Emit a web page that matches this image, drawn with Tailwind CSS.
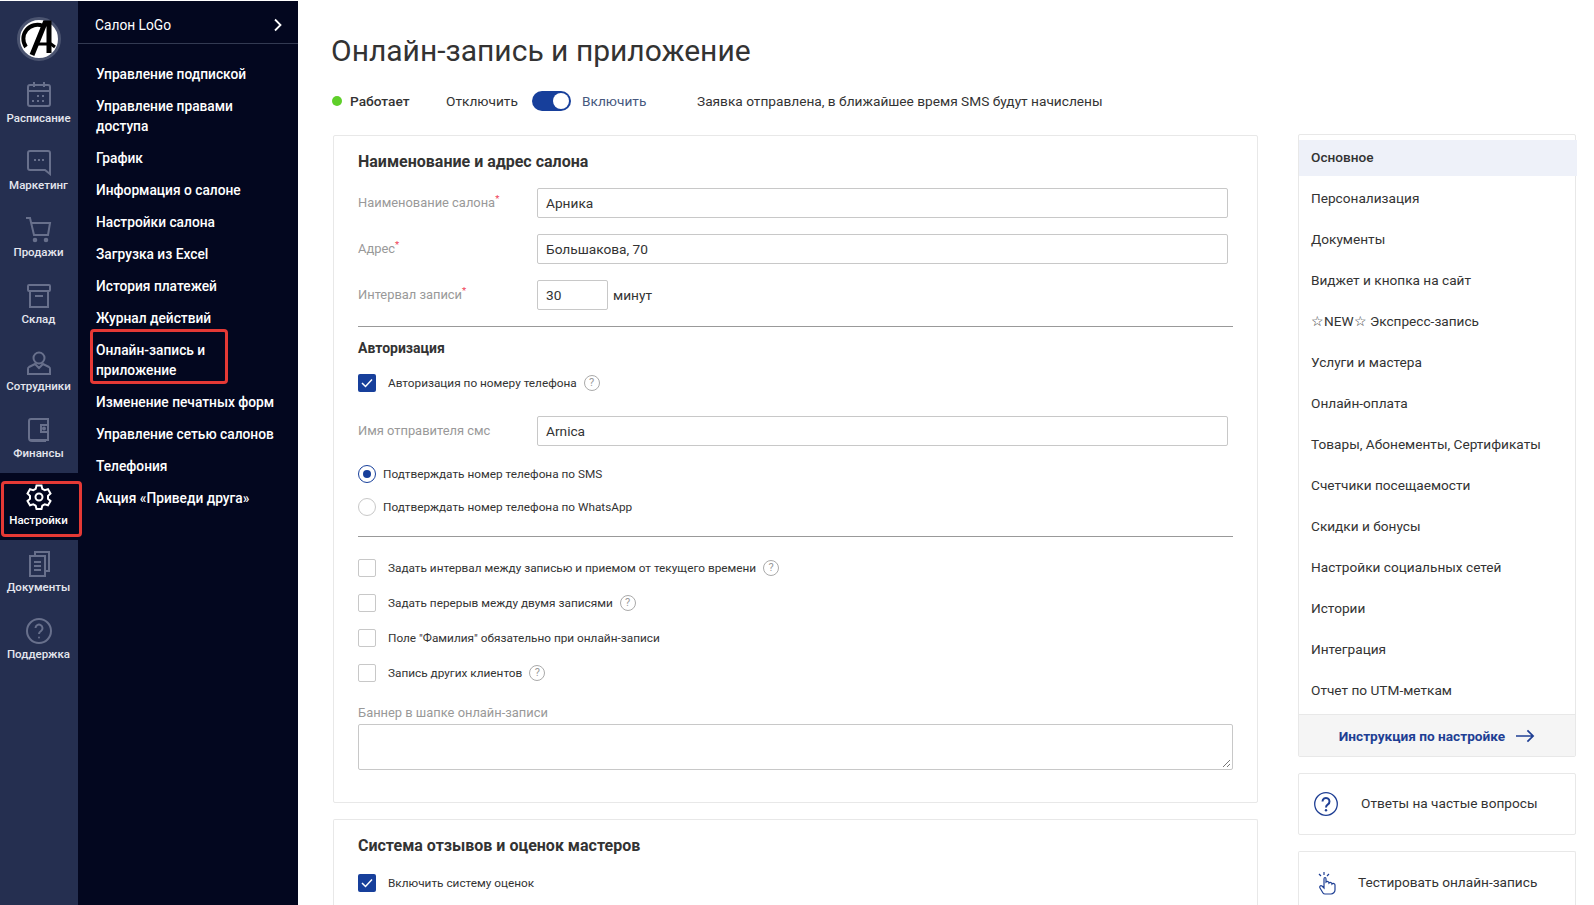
<!DOCTYPE html>
<html lang="ru">
<head>
    <meta charset="UTF-8">
    <title>Онлайн-запись и приложение</title>
    <script src="https://cdn.jsdelivr.net/npm/@tailwindcss/browser@4"></script>
</head>
<body class="h-screen overflow-hidden bg-white font-['Roboto',sans-serif] text-[#333]">
<div class="relative flex h-[905px] overflow-hidden pt-px">
    <!-- icon rail -->
    <nav class="w-[78px] shrink-0 bg-[#252f50] text-[#e4e6ee]">
        <div class="flex h-[70px] items-center justify-center pr-px pt-[6px]">
            <div class="flex h-[44px] w-[44px] items-center justify-center rounded-full border-[3px] border-[#4b5470] bg-white">
                <svg viewBox="0 0 38 38" class="h-[38px] w-[38px]"><path d="M6 27A14 14 0 0 1 23 6" fill="none" stroke="#000" stroke-width="4"/><path d="M12 35 25 3h4v30" fill="none" stroke="#000" stroke-width="5"/><path d="M17 24h14l4 3" fill="none" stroke="#000" stroke-width="3"/></svg>
            </div>
        </div>
        <a class="flex h-[67px] flex-col items-center pr-px pt-[10px] text-[11.5px] font-medium">
            <svg viewBox="0 0 28 28" class="h-[28px] w-[28px]" fill="none" stroke="#68708c" stroke-width="2"><rect x="3" y="4" width="22" height="21" rx="2"/><path d="M3 10h22M9 1v5M19 1v5"/><path d="M12 15h2M17 15h2M7 20h2M12 20h2M17 20h2"/></svg>
            <span class="mt-[2px] leading-[14px]">Расписание</span>
        </a>
        <a class="flex h-[67px] flex-col items-center pr-px pt-[10px] text-[11.5px] font-medium">
            <svg viewBox="0 0 28 28" class="h-[28px] w-[28px]" fill="none" stroke="#68708c" stroke-width="2"><path d="M5 3h18a2 2 0 0 1 2 2v21l-5-4H5a2 2 0 0 1-2-2V5a2 2 0 0 1 2-2z"/><path d="M9 12h2M13 12h2M17 12h2"/></svg>
            <span class="mt-[2px] leading-[14px]">Маркетинг</span>
        </a>
        <a class="flex h-[67px] flex-col items-center pr-px pt-[10px] text-[11.5px] font-medium">
            <svg viewBox="0 0 28 28" class="h-[28px] w-[28px]" fill="none" stroke="#68708c" stroke-width="2"><path d="M1 3h4l4 17h14l2-12H7"/><circle cx="10" cy="25" r="1.3" fill="#68708c"/><circle cx="21" cy="25" r="1.3" fill="#68708c"/></svg>
            <span class="mt-[2px] leading-[14px]">Продажи</span>
        </a>
        <a class="flex h-[67px] flex-col items-center pr-px pt-[10px] text-[11.5px] font-medium">
            <svg viewBox="0 0 28 28" class="h-[28px] w-[28px]" fill="none" stroke="#68708c" stroke-width="2"><rect x="3" y="3" width="22" height="6" rx="1"/><path d="M5 9v16h18V9M10 14h8"/></svg>
            <span class="mt-[2px] leading-[14px]">Склад</span>
        </a>
        <a class="flex h-[67px] flex-col items-center pr-px pt-[10px] text-[11.5px] font-medium">
            <svg viewBox="0 0 28 28" class="h-[28px] w-[28px]" fill="none" stroke="#68708c" stroke-width="2"><circle cx="14" cy="9" r="5.5"/><path d="M10 15l-6 3a2 2 0 0 0-1 2v5h22v-5a2 2 0 0 0-1-2l-6-3-4 4z"/></svg>
            <span class="mt-[2px] leading-[14px]">Сотрудники</span>
        </a>
        <a class="flex h-[67px] flex-col items-center pr-px pt-[10px] text-[11.5px] font-medium">
            <svg viewBox="0 0 28 28" class="h-[28px] w-[28px]" fill="none" stroke="#68708c" stroke-width="2"><path d="M6 3h17v21H6a2 2 0 0 1-2-2V5a2 2 0 0 1 2-2zM4 22a3 3 0 0 0 3 3h14"/><path d="M23 9h-7v7h7"/><circle cx="19" cy="12.500" r="1" fill="#68708c"/></svg>
            <span class="mt-[2px] leading-[14px]">Финансы</span>
        </a>
        <a class="flex h-[67px] flex-col items-center bg-[#03071f] pr-px pt-[10px] text-[11.5px] font-medium text-white">
            <svg viewBox="0 0 28 28" class="h-[28px] w-[28px]" fill="none" stroke="#fff" stroke-width="2"><circle cx="14" cy="14" r="3.500"/><path d="M11.500 2.500h5l.8 3.400 2.400 1.300 3.300-1 2.500 4.300-2.500 2.400v2.800l2.500 2.300-2.500 4.300-3.300-1-2.400 1.400-.8 3.300h-5l-.8-3.300-2.400-1.400-3.300 1-2.500-4.300 2.500-2.300v-2.800l-2.500-2.400 2.500-4.300 3.300 1 2.400-1.300z"/></svg>
            <span class="mt-[2px] leading-[14px]">Настройки</span>
        </a>
        <a class="flex h-[67px] flex-col items-center pr-px pt-[10px] text-[11.5px] font-medium">
            <svg viewBox="0 0 28 28" class="h-[28px] w-[28px]" fill="none" stroke="#68708c" stroke-width="2"><path d="M10 6V2h14v19h-4"/><path d="M5 6h15v20H5zM9 12h7M9 16h7M9 20h7"/></svg>
            <span class="mt-[2px] leading-[14px]">Документы</span>
        </a>
        <a class="flex h-[67px] flex-col items-center pr-px pt-[10px] text-[11.5px] font-medium">
            <svg viewBox="0 0 28 28" class="h-[28px] w-[28px]" fill="none" stroke="#68708c" stroke-width="2"><circle cx="14" cy="14" r="12"/><path d="M10.500 11a3.500 3.500 0 1 1 5.500 3c-1.300.9-2 1.600-2 3"/><circle cx="14" cy="20.500" r="1" fill="#68708c" stroke="none"/></svg>
            <span class="mt-[2px] leading-[14px]">Поддержка</span>
        </a>
    </nav>

    <!-- settings menu -->
    <aside class="w-[220px] shrink-0 bg-[#03071f] text-[13.75px] font-medium leading-[20px] text-white">
        <div class="flex h-[43px] items-center justify-between border-b border-[#333a52] pl-[17px] pr-[15px] pt-[5px]">
            <span class="font-normal">Салон LoGo</span>
            <svg viewBox="0 0 10 14" class="h-[14px] w-[10px]" fill="none" stroke="#fff" stroke-width="1.800"><path d="M2 1.500 7.500 7 2 12.500"/></svg>
        </div>
        <ul class="flex flex-col gap-[12px] pl-[18px] pr-[20px] pt-[20px]">
            <li>Управление подпиской</li>
            <li>Управление правами доступа</li>
            <li>График</li>
            <li>Информация о салоне</li>
            <li>Настройки салона</li>
            <li>Загрузка из Excel</li>
            <li>История платежей</li>
            <li>Журнал действий</li>
            <li class="relative">Онлайн-запись и<br>приложение<span class="absolute left-[-6px] top-[-11px] h-[55px] w-[138px] rounded-[4px] border-[3px] border-[#e53935]"></span></li>
            <li>Изменение печатных форм</li>
            <li>Управление сетью салонов</li>
            <li>Телефония</li>
            <li>Акция «Приведи друга»</li>
        </ul>
    </aside>

    <!-- content -->
    <main class="min-w-0 flex-1">
        <div class="flex">
            <div class="w-[960px] shrink-0 pl-[33px]">
                <h1 class="pt-[30px] text-[30px] font-normal leading-[40px]">Онлайн-запись и приложение</h1>
                <div class="mt-[18px] flex h-[24px] items-center text-[13.7px]">
                    <span class="ml-px h-[10px] w-[10px] rounded-full bg-[#5fcf2a]"></span>
                    <span class="ml-[8px] w-[96px] font-medium">Работает</span>
                    <span class="w-[86px]">Отключить</span>
                    <span class="relative h-[20px] w-[39px] rounded-full bg-[#173f9b]"><span class="absolute right-[2px] top-[2px] h-[16px] w-[16px] rounded-full bg-white"></span></span>
                    <span class="ml-[11px] w-[115px] text-[#46587e]">Включить</span>
                    <span>Заявка отправлена, в ближайшее время SMS будут начислены</span>
                </div>
                <section class="ml-[2px] mt-[22px] h-[668px] w-[925px] rounded-[2px] border border-[#e8e8e8] px-[24px]">
                    <h2 class="pt-[15px] text-[16px] font-bold leading-[22px]">Наименование и адрес салона</h2>
                    <div class="mt-[15px] flex h-[30px] items-center text-[12.9px] text-[#999]">
                        <span class="w-[179px]">Наименование салона<sup class="text-[#f0445a]">*</sup></span>
                        <div class="flex h-[30px] w-[691px] items-center rounded-[2px] border border-[#c8c8c8] px-[8px] text-[13.7px] text-[#333]">Арника</div>
                    </div>
                    <div class="mt-[16px] flex h-[30px] items-center text-[12.9px] text-[#999]">
                        <span class="w-[179px]">Адрес<sup class="text-[#f0445a]">*</sup></span>
                        <div class="flex h-[30px] w-[691px] items-center rounded-[2px] border border-[#c8c8c8] px-[8px] text-[13.7px] text-[#333]">Большакова, 70</div>
                    </div>
                    <div class="mt-[16px] flex h-[30px] items-center text-[12.9px] text-[#999]">
                        <span class="w-[179px]">Интервал записи<sup class="text-[#f0445a]">*</sup></span>
                        <div class="flex h-[30px] w-[71px] items-center rounded-[2px] border border-[#c8c8c8] px-[8px] text-[13.7px] text-[#333]">30</div>
                        <span class="ml-[5px] text-[13.7px] text-[#333]">минут</span>
                    </div>
                    <div class="mt-[16px] h-px w-[875px] bg-[#999]"></div>
                    <h3 class="mt-[11px] text-[14px] font-bold leading-[20px]">Авторизация</h3>
                    <div class="mt-[16px] flex h-[18px] items-center text-[11.8px]">
                        <span class="flex h-[18px] w-[18px] items-center justify-center rounded-[2px] bg-[#173f9b]"><svg viewBox="0 0 12 10" class="h-[10px] w-[12px]" fill="none" stroke="#fff" stroke-width="1.500"><path d="M1 5l3.500 3.500L11 1.500"/></svg></span>
                        <span class="ml-[12px] pt-[2px]">Авторизация по номеру телефона</span>
                        <span class="ml-[7px] flex h-[16px] w-[16px] items-center justify-center rounded-full border border-[#aaa] text-[11px] text-[#999]">?</span>
                    </div>
                    <div class="mt-[24px] flex h-[30px] items-center text-[12.9px] text-[#999]">
                        <span class="w-[179px]">Имя отправителя смс</span>
                        <div class="flex h-[30px] w-[691px] items-center rounded-[2px] border border-[#c8c8c8] px-[8px] text-[13.7px] text-[#333]">Arnica</div>
                    </div>
                    <div class="mt-[19px] flex h-[18px] items-center text-[11.8px]">
                        <span class="flex h-[18px] w-[18px] items-center justify-center rounded-full border border-[#173f9b]"><span class="h-[8px] w-[8px] rounded-full bg-[#173f9b]"></span></span>
                        <span class="ml-[7px] pt-[2px]">Подтверждать номер телефона по SMS</span>
                    </div>
                    <div class="mt-[15px] flex h-[18px] items-center text-[11.8px]">
                        <span class="h-[18px] w-[18px] rounded-full border border-[#c8c8c8]"></span>
                        <span class="ml-[7px] pt-[2px]">Подтверждать номер телефона по WhatsApp</span>
                    </div>
                    <div class="mt-[20px] h-px w-[875px] bg-[#999]"></div>
                    <div class="mt-[22px] flex h-[18px] items-center text-[11.8px]">
                        <span class="h-[18px] w-[18px] rounded-[2px] border border-[#c8c8c8]"></span>
                        <span class="ml-[12px] pt-[2px]">Задать интервал между записью и приемом от текущего времени</span>
                        <span class="ml-[7px] flex h-[16px] w-[16px] items-center justify-center rounded-full border border-[#aaa] text-[11px] text-[#999]">?</span>
                    </div>
                    <div class="mt-[17px] flex h-[18px] items-center text-[11.8px]">
                        <span class="h-[18px] w-[18px] rounded-[2px] border border-[#c8c8c8]"></span>
                        <span class="ml-[12px] pt-[2px]">Задать перерыв между двумя записями</span>
                        <span class="ml-[7px] flex h-[16px] w-[16px] items-center justify-center rounded-full border border-[#aaa] text-[11px] text-[#999]">?</span>
                    </div>
                    <div class="mt-[17px] flex h-[18px] items-center text-[11.8px]">
                        <span class="h-[18px] w-[18px] rounded-[2px] border border-[#c8c8c8]"></span>
                        <span class="ml-[12px] pt-[2px]">Поле "Фамилия" обязательно при онлайн-записи</span>
                    </div>
                    <div class="mt-[17px] flex h-[18px] items-center text-[11.8px]">
                        <span class="h-[18px] w-[18px] rounded-[2px] border border-[#c8c8c8]"></span>
                        <span class="ml-[12px] pt-[2px]">Запись других клиентов</span>
                        <span class="ml-[7px] flex h-[16px] w-[16px] items-center justify-center rounded-full border border-[#aaa] text-[11px] text-[#999]">?</span>
                    </div>
                    <div class="mt-[21px] text-[12.9px] leading-[20px] text-[#999]">Баннер в шапке онлайн-записи</div>
                    <div class="relative mt-px h-[46px] w-[875px] rounded-[2px] border border-[#c8c8c8]">
                        <svg viewBox="0 0 10 10" class="absolute bottom-px right-px h-[10px] w-[10px]" stroke="#777" fill="none"><path d="M9 2 2 9M9 6 6 9"/></svg>
                    </div>
                </section>
                <section class="ml-[2px] mt-[16px] h-[90px] w-[925px] rounded-t-[2px] border border-b-0 border-[#e8e8e8] px-[24px]">
                    <h2 class="pt-[15px] text-[16px] font-bold leading-[22px]">Система отзывов и оценок мастеров</h2>
                    <div class="mt-[17px] flex h-[18px] items-center text-[11.8px]">
                        <span class="flex h-[18px] w-[18px] items-center justify-center rounded-[2px] bg-[#173f9b]"><svg viewBox="0 0 12 10" class="h-[10px] w-[12px]" fill="none" stroke="#fff" stroke-width="1.500"><path d="M1 5l3.500 3.500L11 1.500"/></svg></span>
                        <span class="ml-[12px] pt-[2px]">Включить систему оценок</span>
                    </div>
                </section>
            </div>

            <!-- right column -->
            <div class="ml-[40px] w-[278px] shrink-0 pt-[133px] text-[13.65px]">
                <div class="rounded-[2px] border border-[#e8e8e8]">
                    <div class="pt-[5px]">
                        <div class="flex h-[36px] w-[278px] items-center bg-[#eef1f9] pb-px pl-[12px] font-medium">Основное</div>
                    </div>
                    <ul class="pb-[3px] pl-[12px] pt-[2px] leading-[41px]">
                        <li>Персонализация</li>
                        <li>Документы</li>
                        <li>Виджет и кнопка на сайт</li>
                        <li>☆NEW☆ Экспресс-запись</li>
                        <li>Услуги и мастера</li>
                        <li>Онлайн-оплата</li>
                        <li>Товары, Абонементы, Сертификаты</li>
                        <li>Счетчики посещаемости</li>
                        <li>Скидки и бонусы</li>
                        <li>Настройки социальных сетей</li>
                        <li>Истории</li>
                        <li>Интеграция</li>
                        <li>Отчет по UTM-меткам</li>
                    </ul>
                    <div class="flex h-[42px] items-center justify-center gap-[11px] border-t border-[#e8e8e8] bg-[#f5f5f5] pt-px font-bold text-[#1f3f94]">
                        Инструкция по настройке
                        <svg viewBox="0 0 20 14" class="h-[14px] w-[19px]" fill="none" stroke="#1f3f94" stroke-width="1.800"><path d="M0 7h18M12 1l6 6-6 6"/></svg>
                    </div>
                </div>
                <div class="mt-[16px] flex h-[62px] items-center rounded-[2px] border border-[#e8e8e8] pl-[15px]">
                    <svg viewBox="0 0 24 24" class="h-[24px] w-[24px]" fill="none" stroke="#1f3f94" stroke-width="1.300"><circle cx="12" cy="12" r="11.300"/><path d="M8.500 9.500a3.500 3.500 0 1 1 5.400 2.900c-1.200.8-1.900 1.400-1.900 3" stroke-width="2"/><circle cx="12" cy="18.300" r="1.200" fill="#1f3f94" stroke="none"/></svg>
                    <span class="ml-[23px] pb-px">Ответы на частые вопросы</span>
                </div>
                <div class="mt-[16px] flex h-[54px] items-start rounded-t-[2px] border border-b-0 border-[#e8e8e8] pl-[19px] pt-[19px]">
                    <svg viewBox="0 0 18 24" class="h-[24px] w-[18px]" fill="none" stroke="#1f3f94" stroke-width="1.200"><path d="M6 1v3M1 3l2 2M11 3 9 5M6 8v9L4 15c-1.500-1-3 .5-2 2l3 5c.5.800 1 1 2 1h6c2 0 4-2 4-4v-5c0-1.500-2-2-3-1 0-1.500-2-2-3-1 0-1.500-2-2-3-1V8c0-2-2-2-2 0z"/></svg>
                    <span class="ml-[22px] mt-px">Тестировать онлайн-запись</span>
                </div>
            </div>
        </div>
    </main>
    <!-- red marker over the active rail item -->
    <span class="absolute left-[1px] top-[481px] h-[56px] w-[81px] rounded-[4px] border-[3px] border-[#e53935]"></span>
</div>
</body>
</html>
